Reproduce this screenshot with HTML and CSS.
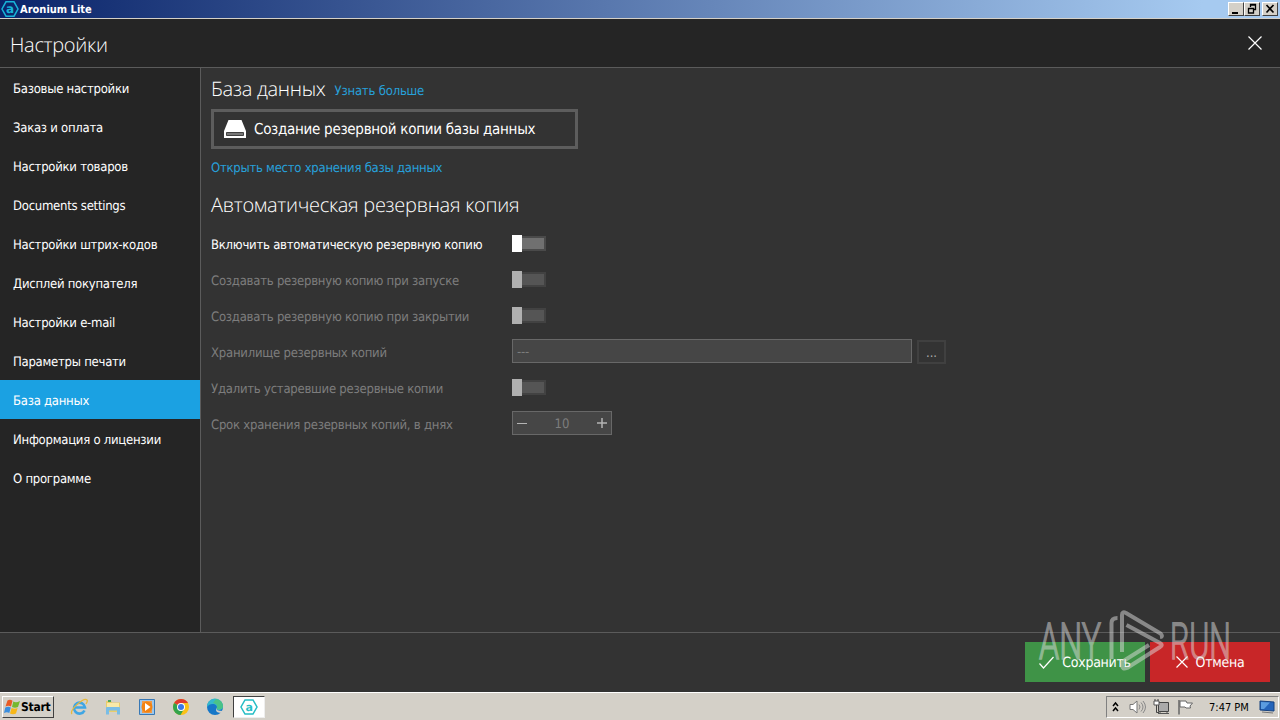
FILE: index.html
```html
<!DOCTYPE html>
<html lang="ru">
<head>
<meta charset="utf-8">
<title>Aronium Lite</title>
<link rel="stylesheet" href="styles.css">
</head>
<body>
<div class="screen">
  <div class="titlebar">
    <svg class="app-icon" width="18" height="18" viewBox="0 0 18 18"><path d="M5 1.800h8l4 7.200-4 7.200H5L1 9z" fill="none" stroke="#18b4d8" stroke-width="1.500"/><text x="9" y="13" text-anchor="middle" class="glyph">a</text></svg>
    <span class="app-name">Aronium Lite</span>
    <div class="win-buttons">
      <span class="win-btn"><svg width="14" height="12" viewBox="0 0 14 12"><path d="M3 9h6v2H3z"/></svg></span>
      <span class="win-btn"><svg width="14" height="12" viewBox="0 0 14 12"><path d="M5.500 4V1.500h5v5H9M5 2h6M3.500 5.500h5v4.500h-5zM3 5.500h6" fill="none" stroke="#000" stroke-width="1.300"/></svg></span>
      <span class="win-btn close"><svg width="14" height="12" viewBox="0 0 14 12"><path d="M3.500 2l7 7.500M10.500 2l-7 7.500" stroke="#000" stroke-width="1.700"/></svg></span>
    </div>
  </div>
  <header class="header">
    <h1 class="h-settings">Настройки</h1>
    <svg class="close-x" width="14" height="14" viewBox="0 0 14 14"><path d="M.5.5l13 13M13.500.5l-13 13" stroke="#fff" stroke-width="1.200"/></svg>
  </header>
  <div class="body">
    <nav class="nav">
      <a class="item"><span>Базовые настройки</span></a>
      <a class="item"><span>Заказ и оплата</span></a>
      <a class="item"><span>Настройки товаров</span></a>
      <a class="item"><span>Documents settings</span></a>
      <a class="item"><span>Настройки штрих-кодов</span></a>
      <a class="item"><span>Дисплей покупателя</span></a>
      <a class="item"><span>Настройки e-mail</span></a>
      <a class="item"><span>Параметры печати</span></a>
      <a class="item active"><span>База данных</span></a>
      <a class="item"><span>Информация о лицензии</span></a>
      <a class="item"><span>О программе</span></a>
    </nav>
    <main class="main">
      <div class="head-row"><h2 class="h-db">База данных</h2><a class="link more">Узнать больше</a></div>
      <div class="backup-btn">
        <svg width="22" height="18" viewBox="0 0 22 18"><path d="M4.500 0h13l4.500 11v7H0v-7z" fill="#fff"/><path d="M2.500 12.500h17v3h-17z" fill="#777" stroke="#222" stroke-width=".8"/></svg>
        <span>Создание резервной копии базы данных</span>
      </div>
      <a class="link open">Открыть место хранения базы данных</a>
      <h2 class="h-auto">Автоматическая резервная копия</h2>
      <div class="form">
        <div class="row on"><span class="label">Включить автоматическую резервную копию</span><i class="toggle"></i></div>
        <div class="row"><span class="label">Создавать резервную копию при запуске</span><i class="toggle"></i></div>
        <div class="row"><span class="label">Создавать резервную копию при закрытии</span><i class="toggle"></i></div>
        <div class="row"><span class="label">Хранилище резервных копий</span><span class="field">---</span><span class="browse">...</span></div>
        <div class="row"><span class="label">Удалить устаревшие резервные копии</span><i class="toggle"></i></div>
        <div class="row"><span class="label">Срок хранения резервных копий, в днях</span><span class="stepper"><svg width="10" height="10" viewBox="0 0 10 10"><path d="M0 5.500h10" stroke="#b4b4b4"/></svg><span>10</span><svg width="10" height="10" viewBox="0 0 10 10"><path d="M0 5h10M5 0v10" stroke="#b4b4b4" stroke-width="1.500"/></svg></span></div>
      </div>
    </main>
  </div>
  <footer class="footer">
    <div class="btn save"><svg width="15" height="13" viewBox="0 0 15 13"><path d="M.5 7.500l4 4.500L14.500 1" fill="none" stroke="#fff" stroke-width="1.200"/></svg><span>Сохранить</span></div>
    <div class="btn cancel"><svg width="12" height="12" viewBox="0 0 12 12"><path d="M.5.5l11 11M11.500.5l-11 11" stroke="#fff" stroke-width="1.200"/></svg><span>Отмена</span></div>
  </footer>
  <div class="taskbar">
    <div class="start"><svg width="17" height="16" viewBox="0 0 17 16"><path d="M3.500 1.500q2.500-1.500 5 .2L7 7.500Q4.500 6 1.500 7.500z" fill="#e85b25"/><path d="M9.300 2.500Q12 4.200 16 2L14 8q-3 1.600-6 0z" fill="#76b82e"/><path d="M1.300 8.500q3-1.500 5.500 0L5.300 14Q3 12.500 0 14z" fill="#3b8ede"/><path d="M7.600 9q3 1.600 6 0L12 14.500q-3 1.500-6 0z" fill="#f7b718"/></svg><span>Start</span></div>
    <div class="apps">
      <svg width="18" height="18" viewBox="0 0 18 18"><path d="M14.500 12.500A5.500 5.500 0 1 1 15 9.500H5" fill="none" stroke="#3fa6e4" stroke-width="2.600"/><path d="M2 16C-1 12 14-1 17 2q1 1-1 4" fill="none" stroke="#e7b93c" stroke-width="1.300"/></svg>
      <svg width="18" height="18" viewBox="0 0 18 18"><path d="M2 3h5l1 1.500h8V14H2z" fill="#e9cd6c"/><path d="M3 5h12v6H3z" fill="#f8e9a8"/><path d="M2 16.500V10q0-1 1-1h12q1 0 1 1v6.500h-3v-4H5v4z" fill="#79bde6"/><path d="M4 2h3v2H4z" fill="#4aa55b"/></svg>
      <svg width="18" height="18" viewBox="0 0 18 18"><path d="M1.500 1.500h15v15h-15z" fill="#9cc7ec" stroke="#3878b5"/><path d="M4 3h10v12H4z" fill="#ef9a4a"/><circle cx="9" cy="9" r="5.500" fill="#f38312"/><path d="M7 5l5.500 4L7 13z" fill="#fff"/></svg>
      <svg width="18" height="18" viewBox="0 0 18 18"><circle cx="9" cy="9" r="8" fill="#fbc116"/><path d="M9 9L2.100 5A8 8 0 0 1 16 5H9z" fill="#df3b2f"/><path d="M9 9L2.100 5A8 8 0 0 0 8.500 17l3.500-6z" fill="#33a34c"/><circle cx="9" cy="9" r="4" fill="#fff"/><circle cx="9" cy="9" r="3" fill="#3b78e7"/></svg>
      <svg width="18" height="18" viewBox="0 0 18 18"><circle cx="9" cy="9" r="8" fill="#1677c8"/><path d="M1 9a8 8 0 0 1 16-1c.5 4-5 5-6.500 3 1.500-3-1-5-4-5Q3 6 1 9z" fill="#35b9cb"/><path d="M10 1q7 1 7 8-1 3-5 2.500-2-.5-1-2.500 1-3-4-4z" fill="#54c66a" opacity=".7"/><path d="M10.500 10q-1 3 6 3l1.500-2v2l-2 2q-6 0-6-3 0-2 .5-2z" fill="#d4d0c8"/></svg>
      <div class="task"><svg width="18" height="18" viewBox="0 0 18 18"><path d="M5 2h8l4 7-4 7H5L1 9z" fill="none" stroke="#25bdc5" stroke-width="1.500"/><text x="9" y="13" text-anchor="middle" class="glyph light">a</text></svg></div>
    </div>
    <div class="tray">
      <svg class="chev" width="8" height="12" viewBox="0 0 8 12"><path d="M1 5l2.500-3L6 5M1 10l2.500-3L6 10" fill="none" stroke="#000" stroke-width="1.500"/></svg>
      <svg class="vol" width="17" height="16" viewBox="0 0 17 16"><path d="M1 5.500h3L8 2v12l-4-3.500H1z" fill="#fff" stroke="#777"/><path d="M10 5.500q2 2.500 0 5M12 3.500q4 4.500 0 9M14 2q5 6 0 12" fill="none" stroke="#888"/></svg>
      <svg class="net" width="17" height="16" viewBox="0 0 17 16"><path d="M5.500 3.500h10v9h-10z" fill="#aaa" stroke="#444"/><path d="M5 14.500h11M7 12.500v2M14 12.500v2" stroke="#555"/><path d="M2 0v3M5 0v3M3.500 6v7.500H6" fill="none" stroke="#444"/><path d="M1 2h5v4H1z" fill="#fff" stroke="#555"/></svg>
      <svg class="flag" width="17" height="16" viewBox="0 0 17 16"><path d="M2 1v14.500" stroke="#666" stroke-width="1.500"/><path d="M3 2h6l1 2h5.500l-2.500 3 .5 2H9L8 8H3z" fill="#fff" stroke="#666"/></svg>
      <span class="clock">7:47 PM</span>
      <svg class="desk" width="16" height="14" viewBox="0 0 16 14"><path d="M1 1l14 1v9L1 10z" fill="#2464ba" stroke="#16427f"/><path d="M2 2l9 .5L5 9 2 9z" fill="#5b9cdf"/><path d="M3 12l11 1" stroke="#777"/></svg>
    </div>
  </div>
  <svg class="watermark" width="210" height="80" viewBox="0 0 210 80">
    <text x="9" y="54" textLength="62" lengthAdjust="spacingAndGlyphs">ANY</text>
    <text x="140" y="54" textLength="61" lengthAdjust="spacingAndGlyphs">RUN</text>
    <path d="M81.500 54V18q0-5 6-5M92 47V10q0-4 4-2l34.500 20.500q3 3-.5 3.500M96.500 20L130 38q3.500 2 0 4L97 63q-5 2-5-3 0-3 3-5l24-15"/>
  </svg>
</div>
</body>
</html>
```
FILE: styles.css
```css
*{box-sizing:border-box}
body{margin:0;font-family:"DejaVu Sans Condensed","Noto Sans",sans-serif;font-size:13px;letter-spacing:-.26px;text-rendering:geometricPrecision}
.screen{position:relative;width:1280px;height:720px;overflow:hidden;display:flex;flex-direction:column;background:#333;color:#fff}
h1,h2{margin:0;font-family:"Open Sans",sans-serif;font-weight:300;font-size:20px;line-height:28px;letter-spacing:-.29px;white-space:nowrap}
svg{flex:none;display:block}
span,a{white-space:nowrap}
.titlebar{height:19px;display:flex;align-items:center;padding:0 2px 1px 1px;background:linear-gradient(90deg,#0a246a,#a6caf0 94%);border-bottom:1px solid #d4d0c8}
.app-name{margin-left:1px;padding-top:1px;font-size:11px;font-weight:bold;letter-spacing:0}
.glyph{font:bold 12px "DejaVu Sans",sans-serif;fill:#18b4d8}
.glyph.light{font-size:11px;fill:#25bdc5}
.win-buttons{margin-left:auto;display:flex}
.win-btn{width:16px;height:14px;background:#d4d0c8;border:1px solid;border-color:#fff #404040 #404040 #fff}
.win-btn.close{margin-left:2px}
.header{height:49px;background:#252525;border-bottom:1px solid #5b5b5b;padding:0 18px 0 10px;display:flex;align-items:center;justify-content:space-between}
.h-settings{padding-top:4px}
.body{height:564px;display:flex}
.nav{width:201px;background:#252525;border-right:1px solid #5b5b5b}
.item{height:39px;display:flex;align-items:center;padding:4px 0 0 13px}
.item.active{background:#1ba1e2}
.main{padding:7px 0 0 10px}
.head-row{display:flex;align-items:center;height:28px}
.link{color:#27a0da}
.more{margin-left:9px;padding-top:5px;letter-spacing:-.2px}
.backup-btn{margin-top:6px;width:367px;height:40px;border:3px solid #5d5d5d;display:flex;align-items:center;padding-left:10px;gap:8px;font-size:15px;letter-spacing:-.28px}
.open{display:block;margin-top:11px;line-height:18px}
.h-auto{margin-top:13px}
.form{margin-top:6px}
.row{height:36px;display:flex;align-items:center;color:#7d7d7d}
.row.on{color:#fff}
.label{width:301px;padding-top:4px;letter-spacing:-.24px}
.toggle{width:34px;height:17px;background:linear-gradient(90deg,#b0b0b0 10px,transparent 10px),linear-gradient(#555,#555) 10px 3px/22px 11px no-repeat,linear-gradient(#424242,#424242) 10px 1px/24px 15px no-repeat}
.on .toggle{background:linear-gradient(90deg,#fff 10px,transparent 10px),linear-gradient(#707070,#707070) 10px 3px/22px 11px no-repeat,linear-gradient(#4a4a4a,#4a4a4a) 10px 1px/24px 15px no-repeat}
.field{width:400px;height:24px;background:#464646;border:1px solid #686868;padding:4px 4px 0;margin-top:-1px;line-height:17px}
.browse{width:29px;height:24px;border:2px solid #404040;margin-left:5px;margin-top:1px;text-align:center;line-height:24px;color:#ababab;letter-spacing:0}
.stepper{width:100px;height:24px;background:#464646;border:1px solid #686868;display:flex;align-items:center;justify-content:space-between;padding:0 4px;margin-top:-1px}
.stepper span{padding-top:4px;letter-spacing:0}
.footer{height:60px;border-top:1px solid #5b5b5b;display:flex;justify-content:flex-end;gap:5px;padding:9px 10px 0 0}
.btn{width:120px;height:40px;display:flex;align-items:center;justify-content:center;gap:8px;font-size:14px}
.btn span{padding-top:2px}
.save{background:#3f9347}
.cancel{background:#c82628}
.taskbar{height:28px;background:#d4d0c8;border-top:1px solid #fff;display:flex;align-items:center;color:#000;padding:0 1px 0 2px}
.start{width:52px;height:22px;border:1px solid;border-color:#fff #404040 #404040 #fff;display:flex;align-items:center;padding-left:1px;font-weight:bold;font-size:12px}
.apps{display:flex;align-items:center;margin-left:16px;gap:16px}
.task{width:32px;height:22px;background:#fff;border:1px solid;border-color:#404040 #eee #eee #404040;display:flex;align-items:center;justify-content:center;margin-left:-7px}
.tray{margin-left:auto;width:173px;height:22px;border:1px solid;border-color:#808080 #fff #fff #808080;display:flex;align-items:center;padding-left:5px}
.vol{margin-left:9px}
.net{margin-left:7px}
.flag{margin-left:7px}
.clock{margin-left:15px;padding-top:1px;font-size:11px;width:40px;letter-spacing:0}
.desk{margin-left:10px}
.watermark{position:absolute;left:1030px;top:605px;opacity:.5;letter-spacing:0}
.watermark text{font:300 51px Roboto,sans-serif;fill:#ddd;stroke:#ddd;stroke-width:1.5}
.watermark path{fill:none;stroke:#ddd;stroke-width:4;stroke-linejoin:round}
```
